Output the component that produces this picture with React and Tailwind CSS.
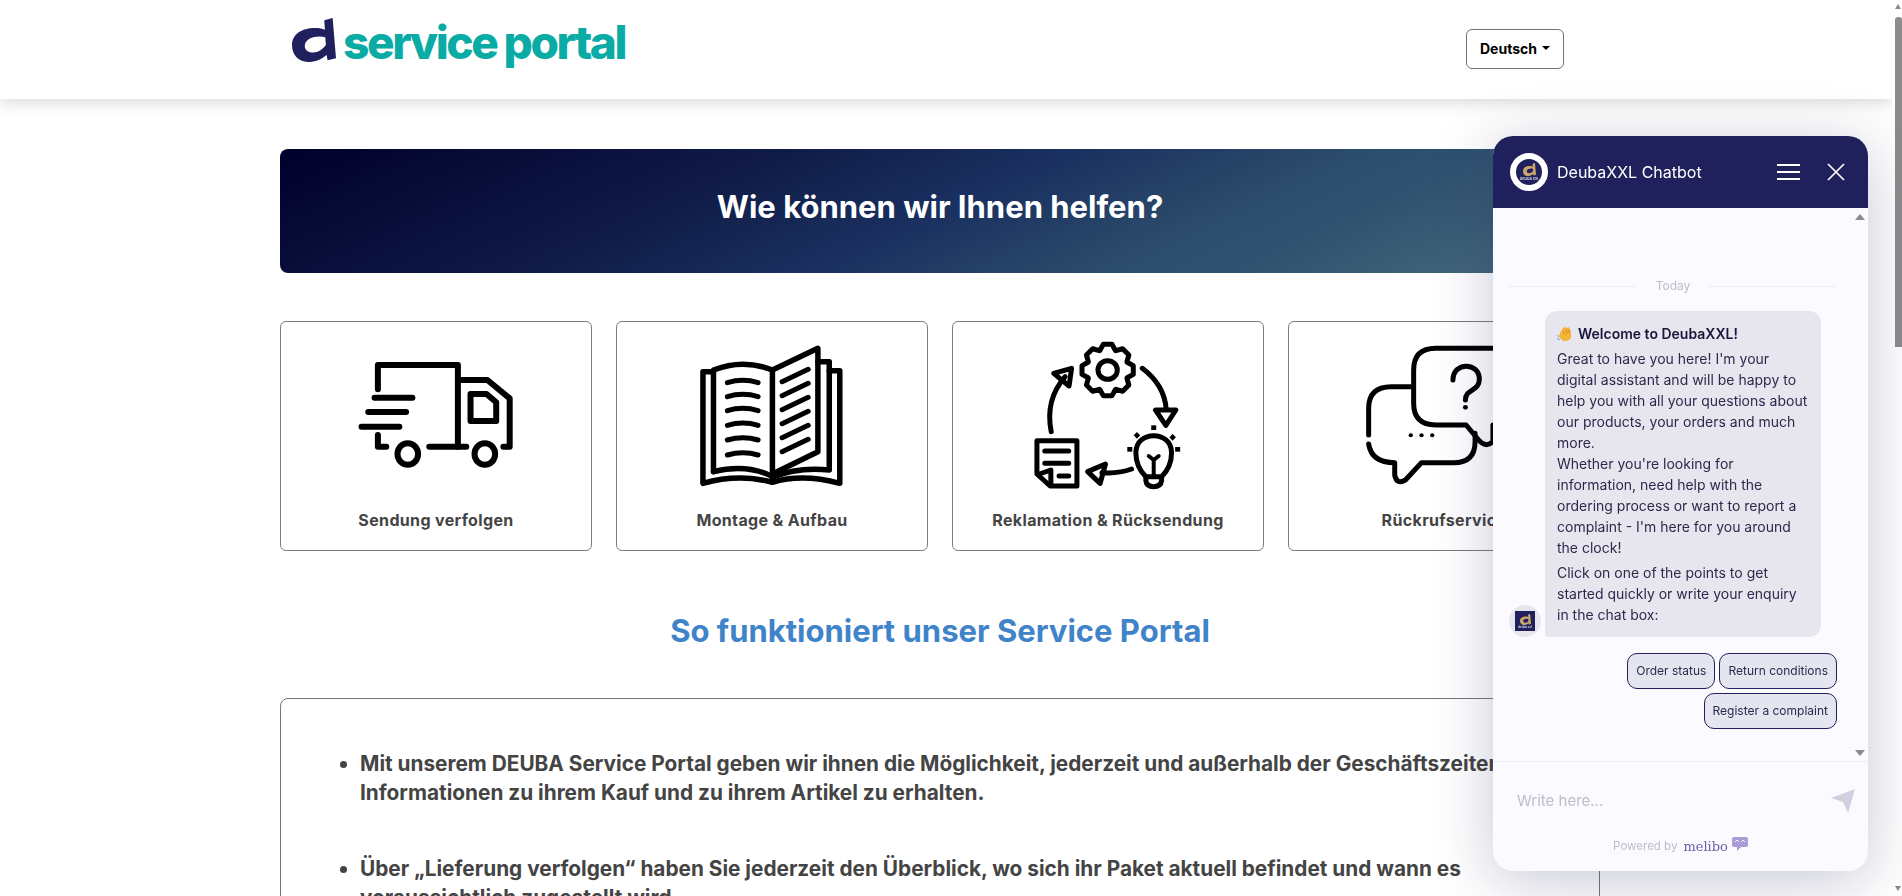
import React from 'react';

const ink = { fill: 'none', stroke: '#000', strokeLinecap: 'round', strokeLinejoin: 'round', vectorEffect: 'non-scaling-stroke' };

function Stroke({ d, w = 6 }) {
  return <path d={d} {...ink} strokeWidth={w} />;
}

function TruckIcon() {
  return (
    <svg width="240" height="150" viewBox="85 60 570 450" preserveAspectRatio="none">
      <Stroke d="M232 208 V135 H422 V380" />
      <Stroke d="M422 180 H492 L545 235 V380 H530" />
      <Stroke d="M452 222 H490 L513 247 V303 H452 Z" />
      <Stroke d="M224 233 H314 M209 276 H299 M193 320 H283" />
      <Stroke d="M232 345 V380 H252 M354 380 H442" />
      <ellipse cx="303" cy="402" rx="24.5" ry="32.5" {...ink} strokeWidth="6" />
      <ellipse cx="486" cy="402" rx="24.5" ry="32.5" {...ink} strokeWidth="6" />
    </svg>
  );
}

function BookIcon() {
  const left = [188, 230, 272, 316, 360, 405];
  return (
    <svg width="240" height="150" viewBox="884 60 570 450" preserveAspectRatio="none">
      <Stroke w={5.5} d="M1030 455 V150 Q1100 115 1170 150 V480" />
      <Stroke w={5.5} d="M1030 455 Q1110 430 1170 470" />
      <Stroke w={5.5} d="M1170 150 L1278 85 V395 L1170 462" />
      <Stroke w={5.5} d="M1278 125 H1305 V450 Q1230 440 1170 472" />
      <Stroke w={5.5} d="M1305 152 H1330 V490 Q1240 460 1170 487 Q1090 460 1005 490 V155 H1030" />
      {left.map((y) => (
        <Stroke key={y} w={5} d={`M1063 ${y} Q1100 ${y - 14} 1136 ${y}`} />
      ))}
      {left.map((y, i) => (
        <Stroke key={i} w={5} d={`M1193 ${185 + i * 42} L1255 ${148 + i * 42}`} />
      ))}
    </svg>
  );
}

function gearPath(cx, cy) {
  // acht Zaehne, x und y getrennt skaliert wie im viewBox
  const pts = [];
  for (let i = 0; i < 8; i++) {
    const a = (i * Math.PI) / 4 - Math.PI / 2;
    [[-0.38, 21], [-0.17, 26], [0.17, 26], [0.38, 21]].forEach(([o, r]) => {
      pts.push(`${(cx + Math.cos(a + o) * r * 2.8).toFixed(1)} ${(cy + Math.sin(a + o) * r * 3).toFixed(1)}`);
    });
  }
  return `M${pts.join(' L')} Z`;
}

function CycleIcon() {
  return (
    <svg width="240" height="150" viewBox="106 60 672 450" preserveAspectRatio="none">
      <Stroke w={5} d={gearPath(441, 150)} />
      <ellipse cx="441" cy="150" rx="27" ry="28" {...ink} strokeWidth="5" />
      <Stroke w={5} d="M538 145 Q600 195 605 268" />
      <Stroke w={5} d="M575 270 H632 L604 316 Z" />
      <Stroke w={5} d="M283 335 Q265 240 322 170" />
      <Stroke w={5} d="M290 160 L340 145 L333 198 Z" />
      <Stroke w={5} d="M548 470 Q520 440 520 398 C520 330 620 330 620 398 Q620 440 592 470 Z" />
      <Stroke w={5} d="M548 470 V482 Q550 500 570 500 Q590 500 592 482 V470" />
      <Stroke w={4} d="M570 465 V420 L556 408 M570 420 L584 408" />
      <rect x="563" y="316" width="14" height="14" />
      <rect x="496" y="381" width="14" height="14" />
      <rect x="630" y="381" width="14" height="14" />
      <path d="M523 336 L532 346 L523 356 L514 346 Z" />
      <path d="M623 342 L632 352 L623 362 L614 352 Z" />
      <Stroke w={5} d="M508 447 Q470 462 425 458" />
      <Stroke w={5} d="M385 455 L435 432 L420 490 Z" />
      <Stroke w={5} d="M243 362 H355 V498 H280 L243 462 Z" />
      <Stroke w={5} d="M250 462 L282 450 V492" />
      <Stroke w={5} d="M265 393 H332 M265 430 H332 M305 468 H332" />
    </svg>
  );
}

function CallbackIcon() {
  return (
    <svg width="240" height="150" viewBox="1047 60 672 450" preserveAspectRatio="none">
      <Stroke w={5} d="M1640 85 H1360 Q1298 85 1298 150 V250 Q1298 315 1360 315 H1445 L1480 360 Q1500 385 1520 365 V315 H1600" />
      <Stroke w={5} d="M1408 180 C1408 125 1482 125 1482 178 C1482 215 1443 205 1443 240" />
      <ellipse cx="1443" cy="262" rx="7" ry="7" />
      <Stroke w={5} d="M1290 200 H1235 Q1172 200 1172 265 V345" />
      <Stroke w={5} d="M1172 372 Q1180 428 1245 428 V465 Q1250 495 1275 480 L1320 428 H1410 Q1470 428 1470 365 V340" />
      <ellipse cx="1290" cy="346" rx="6" ry="6" />
      <ellipse cx="1320" cy="346" rx="6" ry="6" />
      <ellipse cx="1350" cy="346" rx="6" ry="6" />
    </svg>
  );
}

function LogoMark({ className, fill }) {
  return (
    <svg className={className} viewBox="97 55 131 131">
      <path
        fill={fill}
        fillRule="evenodd"
        d="M218 55 L228 175 L203 181 L200 165 C185 178 165 186 145 186 C115 186 97 165 97 135 C97 105 125 85 165 85 C178 85 188 87 195 90 L193 62 Z M196 112 C170 106 135 115 135 138 C135 152 148 158 160 158 C175 158 190 148 198 135 Z"
      />
    </svg>
  );
}

const cards = [
  { label: 'Sendung verfolgen', Icon: TruckIcon },
  { label: 'Montage & Aufbau', Icon: BookIcon },
  { label: 'Reklamation & Rücksendung', Icon: CycleIcon },
  { label: 'Rückrufservice', Icon: CallbackIcon },
];

function Chatbot() {
  return (
    <div className="fixed left-[1493px] top-[136px] w-[375px] h-[735px] flex flex-col rounded-[20px] overflow-hidden bg-[#fbfaff] shadow-[0_10px_60px_rgba(32,32,92,0.25)] font-['Inter',sans-serif]">
      <div className="h-[72px] shrink-0 bg-[#20205c] flex items-center pl-[17px] text-white">
        <div className="w-[38px] h-[38px] rounded-full border-[6px] border-white bg-[#20205c] flex flex-col items-center justify-center">
          <LogoMark className="w-[13px] h-[13px]" fill="#c9a66b" />
          <span className="text-[4px] leading-[5px] text-white">deuba xxl</span>
        </div>
        <span className="ml-[9px] text-[16px] leading-none">DeubaXXL Chatbot</span>
        <svg className="ml-auto" width="23" height="16" viewBox="0 0 23 16" stroke="#fff" strokeWidth="2">
          <path d="M0 1 H23 M0 8 H23 M0 15 H23" />
        </svg>
        <svg className="ml-[27px] mr-[23px]" width="18" height="18" viewBox="0 0 18 18" stroke="#fff" strokeWidth="1.7">
          <path d="M1 1 L17 17 M17 1 L1 17" />
        </svg>
      </div>

      <div className="relative flex-1 pt-[70px] pl-4 pr-[31px]">
        <div className="absolute right-[3px] top-[6px] w-0 h-0 border-x-[5px] border-x-transparent border-b-[6px] border-b-[#8a8a8a]" />
        <div className="absolute right-[3px] bottom-[5px] w-0 h-0 border-x-[5px] border-x-transparent border-t-[6px] border-t-[#8a8a8a]" />

        <div className="flex items-center gap-[19px] text-[12px] leading-4 text-[#bdbccb]">
          <div className="flex-1 h-px bg-[#eeedf4]" />
          Today
          <div className="flex-1 h-px bg-[#eeedf4]" />
        </div>

        <div className="mt-[17px] flex items-end gap-1">
          <div className="w-8 h-8 shrink-0 rounded-full bg-[#e7e6ee] flex items-center justify-center">
            <div className="w-5 h-5 bg-[#20205c] flex flex-col items-center justify-center">
              <LogoMark className="w-[11px] h-[11px]" fill="#c9a66b" />
              <span className="text-[3px] leading-[4px] text-white">deuba xxl</span>
            </div>
          </div>
          <div className="w-[276px] shrink-0 bg-[#e7e6ee] rounded-[12px] rounded-bl-[3px] pt-3 pb-[12px] px-3 text-[14px] leading-[21px] text-[#2b2a4c]">
            <p className="mb-1 flex items-center font-semibold text-[#17163a]">
              <svg className="shrink-0 mr-[6px]" width="15" height="16" viewBox="0 0 15 16">
                <path fill="#f7b538" d="M3 7 L6 2 L8 1 L10 2 L12 1 L14 6 L14 11 Q13 15 8 15 Q5 15 4 13 L2 10 Z" />
                <path stroke="#d98a1c" strokeWidth="0.9" fill="none" d="M6 5 L8 9 M9 3 L10 8 M12 3 L12 7" />
                <path stroke="#6aa6d8" strokeWidth="1" fill="none" d="M0 9 L2 11 M0 12 L3 14" />
              </svg>
              Welcome to DeubaXXL!
            </p>
            <p className="mb-1">
              Great to have you here! I'm your digital assistant and will be happy to help you with all your questions about our products, your orders and much more.
              <br />
              Whether you're looking for information, need help with the ordering process or want to report a complaint - I'm here for you around the clock!
            </p>
            <p>Click on one of the points to get started quickly or write your enquiry in the chat box:</p>
          </div>
        </div>

        <div className="mt-4 flex flex-wrap justify-end gap-1">
          {['Order status', 'Return conditions', 'Register a complaint'].map((t) => (
            <button key={t} className="h-9 px-2 rounded-[10px] border border-[#20205c] bg-[#e5e5ef] text-[12px] text-[#2b2a4c]">
              {t}
            </button>
          ))}
        </div>
      </div>

      <div className="h-[110px] shrink-0 border-t border-[#eeedf4] flex flex-col">
        <div className="flex items-center pl-6 pr-[13px] pt-[27px]">
          <span className="text-[15px] leading-[22px] text-[#bdbccb]">Write here...</span>
          <svg className="ml-auto" width="24" height="24" viewBox="0 0 24 24">
            <path fill="#d0d0e0" d="M0 9 L24 0 L17 24 L12 13 Z" />
          </svg>
        </div>
        <div className="mt-[24px] flex items-center justify-center text-[11.5px] text-[#bdbccb]">
          Powered by
          <span className="ml-[6px] font-['DejaVu_Serif',serif] text-[13px] text-[#6b5fa8]">melibo</span>
          <svg className="ml-[4px] -mt-[6px]" width="16" height="14" viewBox="0 0 16 14">
            <path fill="#a99bd6" d="M2 0 H14 Q16 0 16 2 V8 Q16 10 14 10 H9 L5 14 V10 H2 Q0 10 0 8 V2 Q0 0 2 0 Z" />
            <path stroke="#fbfaff" fill="none" strokeWidth="0.9" d="M3 5 L5 3 L7 5 M9 5 L11 3 L13 5" />
          </svg>
        </div>
      </div>
    </div>
  );
}

export default function App() {
  return (
    <div className="flex h-screen overflow-hidden bg-white font-['Inter',sans-serif]">
      <div className="flex-1 min-w-0 overflow-hidden">
        <header className="h-[99px] bg-white shadow-[0_2px_16px_rgba(0,0,0,0.18)] relative">
          <div className="ml-[280px] w-[1284px] h-full pl-3 flex items-start justify-between">
            <div className="mt-[18px] flex items-start">
              <LogoMark className="w-11 h-11" fill="#20205f" />
              <span className="ml-[7px] mt-[-3px] text-[46px] leading-[54px] font-extrabold tracking-[-2.4px] text-[#0aaba5] whitespace-nowrap">
                service<span className="ml-[7px]">portal</span>
              </span>
            </div>
            <button className="mt-[29px] w-[98px] h-10 pb-[2px] rounded-md border border-[#6c757d] flex items-center justify-center text-[14px] font-bold text-black">
              Deutsch
              <span className="ml-[5px] w-0 h-0 border-x-[4px] border-x-transparent border-t-[4px] border-t-black" />
            </button>
          </div>
        </header>

        <main className="ml-[280px] w-[1320px]">
          <div className="mt-[50px] h-[124px] pb-[7px] rounded-lg bg-[linear-gradient(155deg,#00002b_0%,#0f1a45_31%,#1a3060_50%,#2c4c6b_68%,#2f5170_76%,#41657a_92%,#4a7282_100%)] flex items-center justify-center">
            <h1 className="text-[31px] font-bold text-white">Wie können wir Ihnen helfen?</h1>
          </div>

          <div className="mt-12 grid grid-cols-4 gap-6">
            {cards.map(({ label, Icon }) => (
              <div key={label} className="h-[230px] rounded-md border border-[#7a7a7a] pt-[18px] flex flex-col items-center">
                <Icon />
                <div className="mt-[18px] text-[16px] leading-6 font-bold tracking-[0.35px] text-[#444]">{label}</div>
              </div>
            ))}
          </div>

          <h2 className="mt-[62px] text-center text-[31px] leading-[36px] font-bold text-[#3f83c9]">So funktioniert unser Service Portal</h2>

          <div className="mt-[49px] rounded-lg border border-[#777] pt-[50px] pb-[60px] pl-[79px] pr-[90px] text-[#444]">
            <ul className="list-disc text-[20.8px] leading-[29px] font-bold">
              <li className="mb-[47px]">
                Mit unserem DEUBA Service Portal geben wir ihnen die Möglichkeit, jederzeit und außerhalb der Geschäftszeiten Informationen zu ihrem Kauf und zu ihrem Artikel zu erhalten.
              </li>
              <li>
                Über „Lieferung verfolgen“ haben Sie jederzeit den Überblick, wo sich ihr Paket aktuell befindet und wann es voraussichtlich zugestellt wird.
              </li>
            </ul>
          </div>
        </main>
      </div>

      <div className="relative w-[10px] shrink-0 bg-white">
        <div className="absolute left-[3px] top-[4px] w-0 h-0 border-x-[3.5px] border-x-transparent border-b-[5px] border-b-[#8a8a8a]" />
        <div className="absolute left-[3px] top-[17px] w-[7px] h-[330px] rounded-t-[3px] bg-[#8c8c8c]" />
        <div className="absolute left-[3px] bottom-[5px] w-0 h-0 border-x-[3.5px] border-x-transparent border-t-[5px] border-t-[#8a8a8a]" />
      </div>

      <Chatbot />
    </div>
  );
}
